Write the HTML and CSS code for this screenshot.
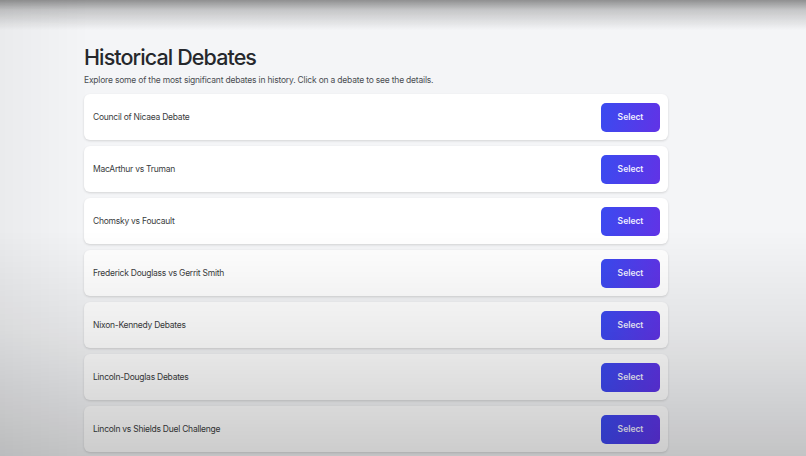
FILE: index.html
```html
<!DOCTYPE html>
<html lang="en">
<head>
<meta charset="utf-8">
<title>Historical Debates</title>
<link rel="stylesheet" href="styles.css">
</head>
<body>
<div class="vignette"></div>
<main class="page">
  <h1 class="title">Historical Debates</h1>
  <p class="subtitle">Explore some of the most significant debates in history. Click on a debate to see the details.</p>
  <ul class="list">
    <li class="card"><span class="name">Council of Nicaea Debate</span><button class="btn">Select</button></li>
    <li class="card"><span class="name">MacArthur vs Truman</span><button class="btn">Select</button></li>
    <li class="card"><span class="name">Chomsky vs Foucault</span><button class="btn">Select</button></li>
    <li class="card"><span class="name">Frederick Douglass vs Gerrit Smith</span><button class="btn">Select</button></li>
    <li class="card"><span class="name">Nixon-Kennedy Debates</span><button class="btn">Select</button></li>
    <li class="card"><span class="name">Lincoln-Douglas Debates</span><button class="btn">Select</button></li>
    <li class="card"><span class="name">Lincoln vs Shields Duel Challenge</span><button class="btn">Select</button></li>
  </ul>
</main>
</body>
</html>
```

FILE: styles.css
```css
html, body {
  margin: 0;
  height: 100%;
  overflow: hidden;
}
body {
  background: #f4f5f7;
  font-family: Inter, "Noto Sans", sans-serif;
  color: #222;
}
.page {
  padding: 44px 0 0 84px;
  width: 584px;
}
.title {
  margin: 0;
  font-size: 21.5px;
  line-height: 26px;
  font-weight: 500;
  color: #26282c;
  letter-spacing: -0.9px;
}
.subtitle {
  margin: 4px 0 0;
  font-size: 8.5px;
  line-height: 12px;
  color: #4a4d52;
  letter-spacing: -0.2px;
}
.list {
  list-style: none;
  margin: 8px 0 0;
  padding: 0;
  display: flex;
  flex-direction: column;
  gap: 6px;
}
.card {
  height: 46px;
  box-sizing: border-box;
  background: #fff;
  border-radius: 6px;
  box-shadow: 0 1px 3px rgba(0,0,0,0.09), 0 1px 2px rgba(0,0,0,0.05);
  display: flex;
  align-items: center;
  justify-content: space-between;
  padding: 0 8px 0 9px;
}
.name {
  font-size: 8.5px;
  color: #3a3c40;
  letter-spacing: -0.25px;
}
.btn {
  width: 59px;
  height: 29px;
  border: 0;
  border-radius: 5px;
  background: linear-gradient(100deg, #3a4bf0 0%, #6133e6 100%);
  color: #f0f0ff;
  font-family: Inter, "Noto Sans", sans-serif;
  font-size: 8.5px;
  font-weight: 600;
  padding: 0;
}
.vignette {
  position: fixed;
  inset: 0;
  pointer-events: none;
  z-index: 10;
  background:
    linear-gradient(180deg, rgba(60,60,60,0.55) 0px, rgba(60,60,60,0.25) 10px, rgba(60,60,60,0) 30px),
    linear-gradient(180deg, rgba(0,0,0,0) 0px, rgba(0,0,0,0) 230px, rgba(0,0,0,0.07) 330px, rgba(0,0,0,0.2) 456px),
    linear-gradient(90deg, rgba(0,0,0,0.04) 0px, rgba(0,0,0,0) 90px);
}
```
